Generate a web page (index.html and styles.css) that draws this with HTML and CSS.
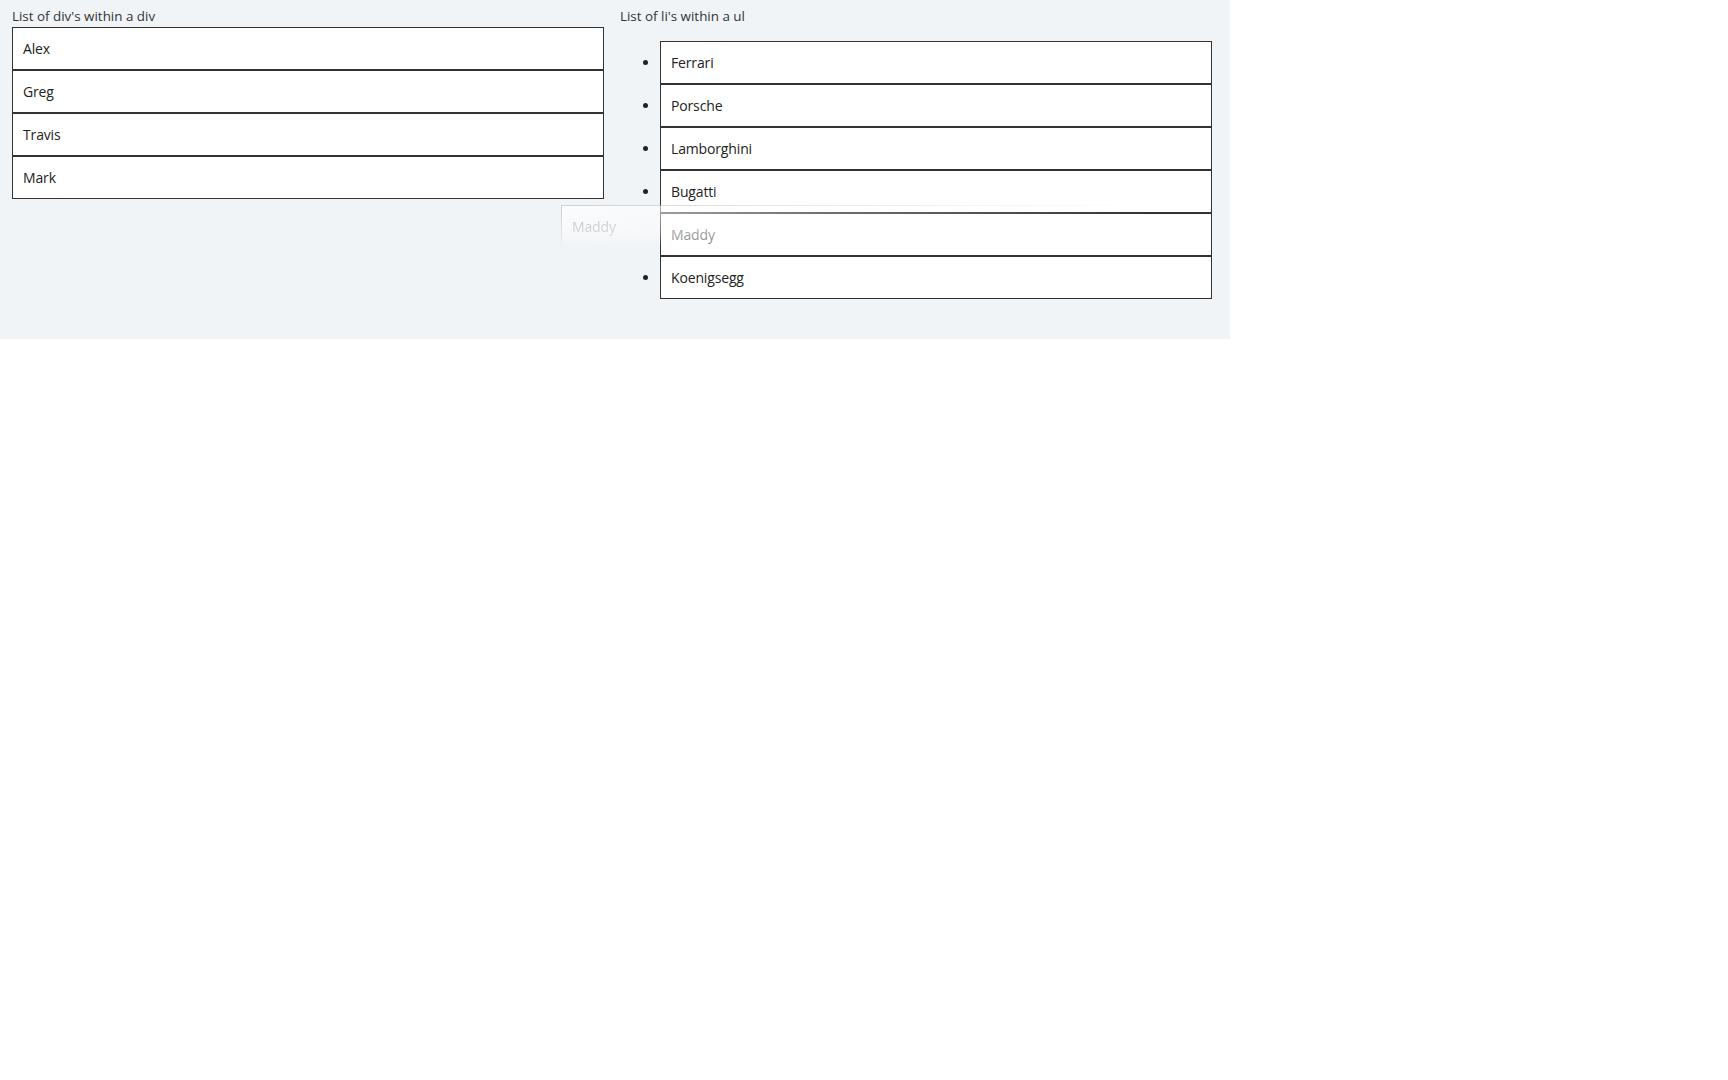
FILE: index.html
```html
<!DOCTYPE html>
<html lang="en">
<head>
    <meta charset="UTF-8">
    <meta name="viewport" content="width=device-width, initial-scale=1.0">
    <title>Drag and drop lists</title>
    <link rel="stylesheet" href="styles.css">
</head>
<body>
    <div class="board">
        <section class="column">
            <div class="caption">List of div's within a div</div>
            <div class="div-list">
                <div class="item">Alex</div>
                <div class="item">Greg</div>
                <div class="item">Travis</div>
                <div class="item">Mark</div>
            </div>
        </section>
        <section class="column">
            <div class="caption">List of li's within a ul</div>
            <ul class="li-list">
                <li class="item">Ferrari</li>
                <li class="item">Porsche</li>
                <li class="item">Lamborghini</li>
                <li class="item">Bugatti</li>
                <li class="item placeholder">Maddy</li>
                <li class="item">Koenigsegg</li>
            </ul>
        </section>
        <!-- item being dragged -->
        <div class="drag-ghost">Maddy</div>
    </div>
</body>
</html>
```

FILE: styles.css
```css
/* page */
body {
    margin: 0;
    padding: 0;
    font-family: "Open Sans", "Noto Sans", Arial, sans-serif;
    font-size: 14px;
    color: #222;
    background-color: #fff;
}
.board {
    position: relative;
    box-sizing: border-box;
    width: 1230px;
    height: 339px;
    padding: 7px 18px 0 12px;
    background-color: #f1f4f7;
    display: grid;
    grid-template-columns: 592px 592px;
    column-gap: 16px;
    align-items: start;
}
.caption {
    font-size: 13.4px;
    line-height: 19px;
    color: #333;
}
.div-list {
    margin-top: 1px;
}
.li-list {
    margin: 15px 0 0;
    padding-left: 40px;
}
.item {
    padding: 12px 10px;
    line-height: 17px;
    letter-spacing: -0.15px;
    border: 1px solid #333;
    background-color: #fff;
}
.placeholder {
    list-style: none;
    color: #808080;
}
.drag-ghost {
    position: absolute;
    left: 561px;
    top: 205px;
    box-sizing: border-box;
    width: 592px;
    height: 43px;
    padding: 12px 10px;
    line-height: 17px;
    letter-spacing: -0.15px;
    border: 1px solid #c4c4c4;
    background-color: #fff;
    color: #a8a8a8;
    opacity: 0.75;
    -webkit-mask-image: linear-gradient(to right, #000 0%, rgba(0,0,0,.5) 40%, transparent 100%), linear-gradient(to bottom, #000 0%, rgba(0,0,0,.6) 60%, transparent 100%);
    -webkit-mask-composite: source-in;
    mask-image: linear-gradient(to right, #000 0%, rgba(0,0,0,.5) 40%, transparent 100%), linear-gradient(to bottom, #000 0%, rgba(0,0,0,.6) 60%, transparent 100%);
    mask-composite: intersect;
}
```
